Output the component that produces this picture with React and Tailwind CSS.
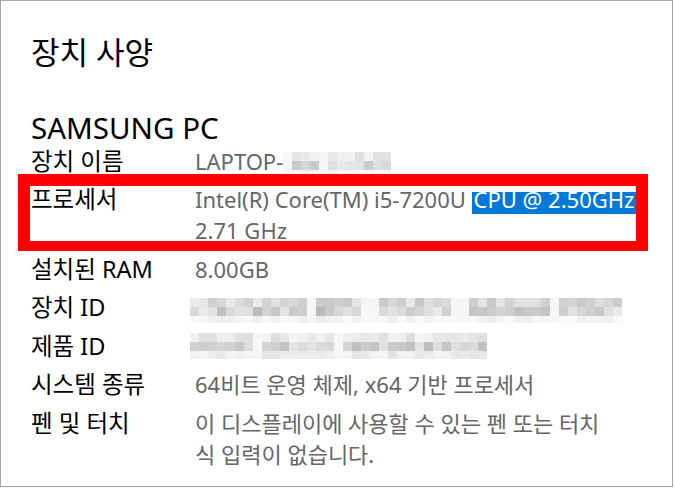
import React from 'react';

// deterministic pseudo-random shades for the blurred (mosaic) values
const makeShades = (seed, count) => {
  let s = seed;
  const out = [];
  for (let i = 0; i < count; i++) {
    s = (s * 1103515245 + 12345) % 2147483648;
    out.push(s / 2147483648);
  }
  return out;
};

const Mosaic = ({ cols, seed, gaps = [], heights = [9, 9, 7], ranges }) => {
  const rnd = makeShades(seed, cols * heights.length);
  return (
    <div className="flex flex-col">
      {heights.map((h, r) => (
        <div key={r} className="flex">
          {Array.from({ length: cols }).map((_, c) => {
            const [lo, hi] = ranges[r];
            let v = Math.round(lo + (hi - lo) * rnd[r * cols + c]);
            if (gaps.includes(c)) v = Math.max(v, 246);
            return (
              <div
                key={c}
                style={{ width: 9, height: h, background: `rgb(${v},${v},${v})` }}
              />
            );
          })}
        </div>
      ))}
    </div>
  );
};

const Row = ({ label, children }) => (
  <div className="flex">
    <div className="w-[164px] shrink-0 text-[23.5px] leading-[31px] text-black">{label}</div>
    <div className="text-[22px] leading-[31px] text-[#666666]">{children}</div>
  </div>
);

export default function App() {
  return (
    <div className="w-[675px] h-[488px] bg-white font-['Noto_Sans','Noto_Sans_CJK_KR',sans-serif]">
      <div className="w-[673px] h-[487px] border border-[#a8a8a8] pl-[30px] pt-[31px]">
        <h1 className="text-[31px] leading-[40px] text-black">장치 사양</h1>
        <div className="mt-[41px] mb-[2.5px] text-[29.5px] leading-[30px] text-black">SAMSUNG PC</div>

        <div className="flex flex-col gap-[7.5px]">
          <Row label="장치 이름">
            <div className="flex items-start">
              <span>LAPTOP-</span>
              <div className="mt-[6px]">
                <Mosaic
                  cols={12}
                  seed={7}
                  heights={[9, 9, 4]}
                  gaps={[0, 4]}
                  ranges={[[222, 242], [200, 236], [240, 250]]}
                />
              </div>
            </div>
          </Row>

          <div className="relative">
            <div className="absolute left-[-13px] top-[-10px] w-[630px] h-[77px] border-[12px] border-b-[10px] border-[#ff0000]" />
            <Row label="프로세서">
              <div className="whitespace-nowrap">
                Intel(R) Core(TM) i5-7200U{' '}
                <span className="inline-block bg-[#0078d7] px-[2px] pb-[7px] leading-[15px] text-white">CPU @ 2.50GHz</span>
              </div>
              <div>2.71 GHz</div>
            </Row>
          </div>

          <Row label="설치된 RAM">8.00GB</Row>

          <Row label="장치 ID">
            <div className="mt-[6px] -ml-[5px]">
              <Mosaic
                cols={48}
                seed={31}
                gaps={[13, 19, 20, 29, 30, 40]}
                ranges={[[200, 238], [185, 235], [236, 250]]}
              />
            </div>
          </Row>

          <Row label="제품 ID">
            <div className="mt-[2.5px] -ml-[5px]">
              <Mosaic
                cols={33}
                seed={97}
                heights={[9, 9, 8]}
                gaps={[7, 16]}
                ranges={[[220, 245], [190, 232], [225, 245]]}
              />
            </div>
          </Row>

          <Row label="시스템 종류">64비트 운영 체제, x64 기반 프로세서</Row>

          <Row label="펜 및 터치">
            <div className="whitespace-nowrap">이 디스플레이에 사용할 수 있는 펜 또는 터치</div>
            <div>식 입력이 없습니다.</div>
          </Row>
        </div>
      </div>
    </div>
  );
}
